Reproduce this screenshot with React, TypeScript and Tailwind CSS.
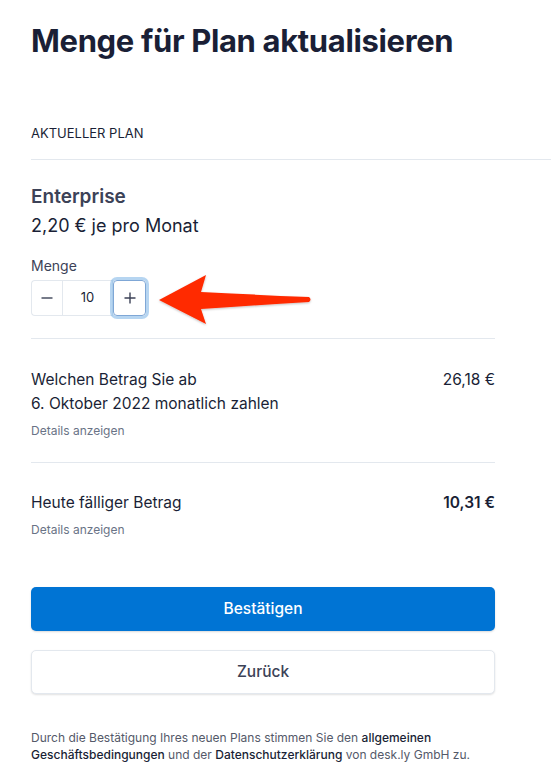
import React from 'react';

function Arrow() {
  return (
    <svg width="170" height="60" viewBox="150 270 170 60" className="pointer-events-none absolute left-[150px] top-[270px]">
      <defs>
        <filter id="sh" x="-10%" y="-20%" width="120%" height="140%">
          <feDropShadow dx="0" dy="1" stdDeviation="1" floodColor="#000" floodOpacity="0.25" />
        </filter>
      </defs>
      <path
        d="M159,300 L206,275 L201,292 Q260,295 309,297 Q312,299.5 309,302 Q260,305 201,309 L206,324 Z"
        fill="#ff2a00"
        filter="url(#sh)"
      />
    </svg>
  );
}

export default function App() {
  return (
    <div className="relative min-h-[766px] w-[551px] overflow-hidden bg-white font-['Inter',sans-serif] text-[#3c4257]">
      <div className="pl-[31px]">
        <h1 className="pt-[20px] text-[31px] font-bold leading-[42px] tracking-[-0.35px] text-[#1a1f36]">
          Menge für Plan aktualisieren
        </h1>

        <div className="mt-[62px] text-[13px] leading-[18px] text-[#1a1f36]">AKTUELLER PLAN</div>
        <div className="mt-[17px] h-px bg-[#e3e8ee]" />

        <div className="w-[464px]">
          <div className="mt-[24px] text-[19px] font-semibold leading-[26px] text-[#3c4257]">Enterprise</div>
          <div className="mt-[3px] text-[18px] leading-[26px] text-[#1a1f36]">2,20 € je pro Monat</div>

          <div className="mt-[17px] text-[14px] leading-[20px] text-[#3c4257]">Menge</div>
          <div className="mt-[4px] flex h-[36px] w-[115px] items-stretch">
            <div className="flex w-[31px] items-center justify-center rounded-l-[4px] border border-r-0 border-[#e3e8ee] text-[#3c4257]">
              <svg width="12" height="12" viewBox="0 0 12 12">
                <path d="M0.5 6H11.5" stroke="currentColor" strokeWidth="1.4" />
              </svg>
            </div>
            <div className="flex w-[51px] items-center justify-center border border-[#e3e8ee] text-[13px] text-[#1a1f36]">
              10
            </div>
            <div className="flex w-[33px] items-center justify-center rounded-[4px] border border-[#7fa7d6] text-[#3c4257] shadow-[0_0_0_3px_rgba(122,178,230,0.55)]">
              <svg width="12" height="12" viewBox="0 0 12 12">
                <path d="M0.5 6H11.5M6 0.5V11.5" stroke="currentColor" strokeWidth="1.4" />
              </svg>
            </div>
          </div>

          <div className="mt-[22px] h-px bg-[#e3e8ee]" />

          <div className="mt-[29px] flex justify-between text-[15.5px] leading-[24px] text-[#1a1f36]">
            <div>
              Welchen Betrag Sie ab
              <br />
              6. Oktober 2022 monatlich zahlen
            </div>
            <div>26,18 €</div>
          </div>
          <div className="mt-[7px] text-[12px] leading-[16px] text-[#697386]">Details anzeigen</div>

          <div className="mt-[23px] h-px bg-[#e3e8ee]" />

          <div className="mt-[28px] flex justify-between text-[15.5px] leading-[24px] text-[#1a1f36]">
            <div>Heute fälliger Betrag</div>
            <div className="font-semibold">10,31 €</div>
          </div>
          <div className="mt-[7px] text-[12px] leading-[16px] text-[#697386]">Details anzeigen</div>

          <button className="mt-[49px] flex h-[44px] w-full items-center justify-center rounded-[5px] bg-[#0074d4] text-[15.5px] font-medium text-white shadow-[0_1px_2px_rgba(0,0,0,0.15)]">
            Bestätigen
          </button>
          <button className="mt-[19px] flex h-[44px] w-full items-center justify-center rounded-[5px] border border-[#e3e8ee] bg-white text-[15.5px] font-medium text-[#3c4257] shadow-[0_1px_2px_rgba(0,0,0,0.12)]">
            Zurück
          </button>

          <p className="mt-[35px] text-[12px] leading-[17px] text-[#545969]">
            Durch die Bestätigung Ihres neuen Plans stimmen Sie den <b className="font-medium text-[#1a1f36]">allgemeinen</b>{' '}
            <b className="font-medium text-[#1a1f36]">Geschäftsbedingungen</b> und der{' '}
            <b className="font-medium text-[#1a1f36]">Datenschutzerklärung</b> von desk.ly GmbH zu.
          </p>
        </div>
      </div>
      <Arrow />
    </div>
  );
}
